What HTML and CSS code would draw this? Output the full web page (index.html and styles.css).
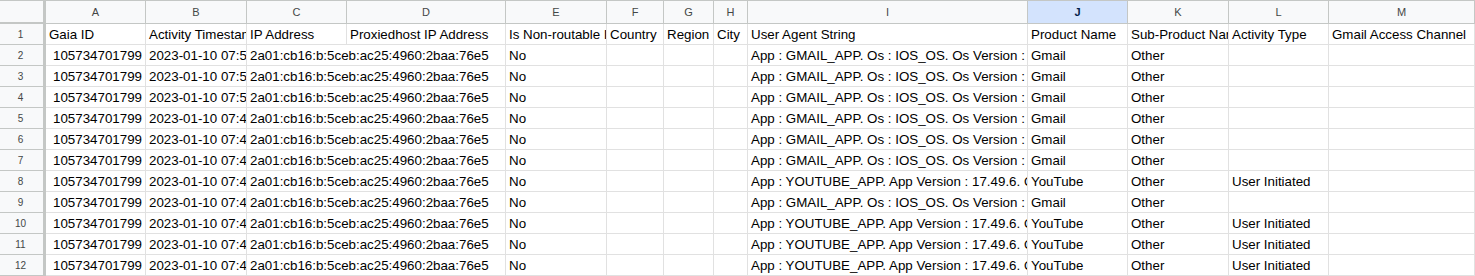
FILE: index.html
```html
<!DOCTYPE html>
<html>
<head>
<meta charset="utf-8">
<link rel="stylesheet" href="styles.css">
</head>
<body>
<div class="sheet">
  <div class="corner"></div>
  <div class="colhdr">A</div><div class="colhdr">B</div><div class="colhdr">C</div><div class="colhdr">D</div><div class="colhdr">E</div><div class="colhdr">F</div><div class="colhdr">G</div><div class="colhdr">H</div><div class="colhdr">I</div><div class="colhdr sel">J</div><div class="colhdr">K</div><div class="colhdr">L</div><div class="colhdr">M</div>

  <div class="rowhdr">1</div>
  <div class="cell">Gaia ID</div><div class="cell">Activity Timestamp</div><div class="cell">IP Address</div><div class="cell">Proxiedhost IP Address</div><div class="cell">Is Non-routable IP Address</div><div class="cell">Country</div><div class="cell">Region</div><div class="cell">City</div><div class="cell">User Agent String</div><div class="cell">Product Name</div><div class="cell">Sub-Product Name</div><div class="cell">Activity Type</div><div class="cell">Gmail Access Channel</div>

  <div class="rowhdr">2</div>
  <div class="cell num">105734701799</div><div class="cell">2023-01-10 07:58:12 UTC</div><div class="cell span2">2a01:cb16:b:5ceb:ac25:4960:2baa:76e5</div><div class="cell">No</div><div class="cell"></div><div class="cell"></div><div class="cell"></div><div class="cell">App : GMAIL_APP. Os : IOS_OS. Os Version : 16.1.2. Device Type : iPhone</div><div class="cell">Gmail</div><div class="cell">Other</div><div class="cell"></div><div class="cell"></div>

  <div class="rowhdr">3</div>
  <div class="cell num">105734701799</div><div class="cell">2023-01-10 07:55:40 UTC</div><div class="cell span2">2a01:cb16:b:5ceb:ac25:4960:2baa:76e5</div><div class="cell">No</div><div class="cell"></div><div class="cell"></div><div class="cell"></div><div class="cell">App : GMAIL_APP. Os : IOS_OS. Os Version : 16.1.2. Device Type : iPhone</div><div class="cell">Gmail</div><div class="cell">Other</div><div class="cell"></div><div class="cell"></div>

  <div class="rowhdr">4</div>
  <div class="cell num">105734701799</div><div class="cell">2023-01-10 07:51:03 UTC</div><div class="cell span2">2a01:cb16:b:5ceb:ac25:4960:2baa:76e5</div><div class="cell">No</div><div class="cell"></div><div class="cell"></div><div class="cell"></div><div class="cell">App : GMAIL_APP. Os : IOS_OS. Os Version : 16.1.2. Device Type : iPhone</div><div class="cell">Gmail</div><div class="cell">Other</div><div class="cell"></div><div class="cell"></div>

  <div class="rowhdr">5</div>
  <div class="cell num">105734701799</div><div class="cell">2023-01-10 07:49:27 UTC</div><div class="cell span2">2a01:cb16:b:5ceb:ac25:4960:2baa:76e5</div><div class="cell">No</div><div class="cell"></div><div class="cell"></div><div class="cell"></div><div class="cell">App : GMAIL_APP. Os : IOS_OS. Os Version : 16.1.2. Device Type : iPhone</div><div class="cell">Gmail</div><div class="cell">Other</div><div class="cell"></div><div class="cell"></div>

  <div class="rowhdr">6</div>
  <div class="cell num">105734701799</div><div class="cell">2023-01-10 07:47:15 UTC</div><div class="cell span2">2a01:cb16:b:5ceb:ac25:4960:2baa:76e5</div><div class="cell">No</div><div class="cell"></div><div class="cell"></div><div class="cell"></div><div class="cell">App : GMAIL_APP. Os : IOS_OS. Os Version : 16.1.2. Device Type : iPhone</div><div class="cell">Gmail</div><div class="cell">Other</div><div class="cell"></div><div class="cell"></div>

  <div class="rowhdr">7</div>
  <div class="cell num">105734701799</div><div class="cell">2023-01-10 07:46:52 UTC</div><div class="cell span2">2a01:cb16:b:5ceb:ac25:4960:2baa:76e5</div><div class="cell">No</div><div class="cell"></div><div class="cell"></div><div class="cell"></div><div class="cell">App : GMAIL_APP. Os : IOS_OS. Os Version : 16.1.2. Device Type : iPhone</div><div class="cell">Gmail</div><div class="cell">Other</div><div class="cell"></div><div class="cell"></div>

  <div class="rowhdr">8</div>
  <div class="cell num">105734701799</div><div class="cell">2023-01-10 07:45:31 UTC</div><div class="cell span2">2a01:cb16:b:5ceb:ac25:4960:2baa:76e5</div><div class="cell">No</div><div class="cell"></div><div class="cell"></div><div class="cell"></div><div class="cell">App : YOUTUBE_APP. App Version : 17.49.6. OS : IOS_OS</div><div class="cell">YouTube</div><div class="cell">Other</div><div class="cell">User Initiated</div><div class="cell"></div>

  <div class="rowhdr">9</div>
  <div class="cell num">105734701799</div><div class="cell">2023-01-10 07:44:08 UTC</div><div class="cell span2">2a01:cb16:b:5ceb:ac25:4960:2baa:76e5</div><div class="cell">No</div><div class="cell"></div><div class="cell"></div><div class="cell"></div><div class="cell">App : GMAIL_APP. Os : IOS_OS. Os Version : 16.1.2. Device Type : iPhone</div><div class="cell">Gmail</div><div class="cell">Other</div><div class="cell"></div><div class="cell"></div>

  <div class="rowhdr">10</div>
  <div class="cell num">105734701799</div><div class="cell">2023-01-10 07:43:19 UTC</div><div class="cell span2">2a01:cb16:b:5ceb:ac25:4960:2baa:76e5</div><div class="cell">No</div><div class="cell"></div><div class="cell"></div><div class="cell"></div><div class="cell">App : YOUTUBE_APP. App Version : 17.49.6. OS : IOS_OS</div><div class="cell">YouTube</div><div class="cell">Other</div><div class="cell">User Initiated</div><div class="cell"></div>

  <div class="rowhdr">11</div>
  <div class="cell num">105734701799</div><div class="cell">2023-01-10 07:42:56 UTC</div><div class="cell span2">2a01:cb16:b:5ceb:ac25:4960:2baa:76e5</div><div class="cell">No</div><div class="cell"></div><div class="cell"></div><div class="cell"></div><div class="cell">App : YOUTUBE_APP. App Version : 17.49.6. OS : IOS_OS</div><div class="cell">YouTube</div><div class="cell">Other</div><div class="cell">User Initiated</div><div class="cell"></div>

  <div class="rowhdr">12</div>
  <div class="cell num">105734701799</div><div class="cell">2023-01-10 07:41:37 UTC</div><div class="cell span2">2a01:cb16:b:5ceb:ac25:4960:2baa:76e5</div><div class="cell">No</div><div class="cell"></div><div class="cell"></div><div class="cell"></div><div class="cell">App : YOUTUBE_APP. App Version : 17.49.6. OS : IOS_OS</div><div class="cell">YouTube</div><div class="cell">Other</div><div class="cell">User Initiated</div><div class="cell"></div>
</div>
</body>
</html>
```

FILE: styles.css
```css
html, body {
  margin: 0;
  padding: 0;
  background: #ffffff;
}

.sheet {
  display: grid;
  grid-template-columns: 46px 100px 101px 100px 159px 101px 57px 50px 34px 280px 100px 101px 100px 146px;
  grid-template-rows: 24px repeat(12, 21px);
  width: 1475px;
  font-family: "Liberation Sans", Arial, sans-serif;
  overflow: hidden;
}

.sheet > div {
  box-sizing: border-box;
  overflow: hidden;
  white-space: nowrap;
}

.corner {
  background: #f8f9fa;
  border-top: 1px solid #c4c7c5;
  border-right: 3px solid #c4c7c5;
  border-bottom: 2px solid #c4c7c5;
}

.colhdr {
  background: #f8f9fa;
  border-top: 1px solid #c4c7c5;
  border-right: 1px solid #c4c7c5;
  border-bottom: 1px solid #c4c7c5;
  color: #444746;
  font-size: 11px;
  text-align: center;
  line-height: 22px;
}

.colhdr.sel {
  background: #d3e3fd;
  color: #041e49;
  font-weight: bold;
}

.rowhdr {
  background: #f8f9fa;
  border-right: 3px solid #c4c7c5;
  border-bottom: 1px solid #c4c7c5;
  color: #444746;
  font-size: 10px;
  text-align: center;
  line-height: 21px;
  padding-right: 2px;
}

.cell {
  border-right: 1px solid #e1e1e1;
  border-bottom: 1px solid #e1e1e1;
  color: #000000;
  font-size: 13.33px;
  line-height: 19px;
  padding: 1px 3px 0 3px;
}

.cell.num {
  text-align: right;
}

.cell.span2 {
  grid-column: span 2;
}
```
